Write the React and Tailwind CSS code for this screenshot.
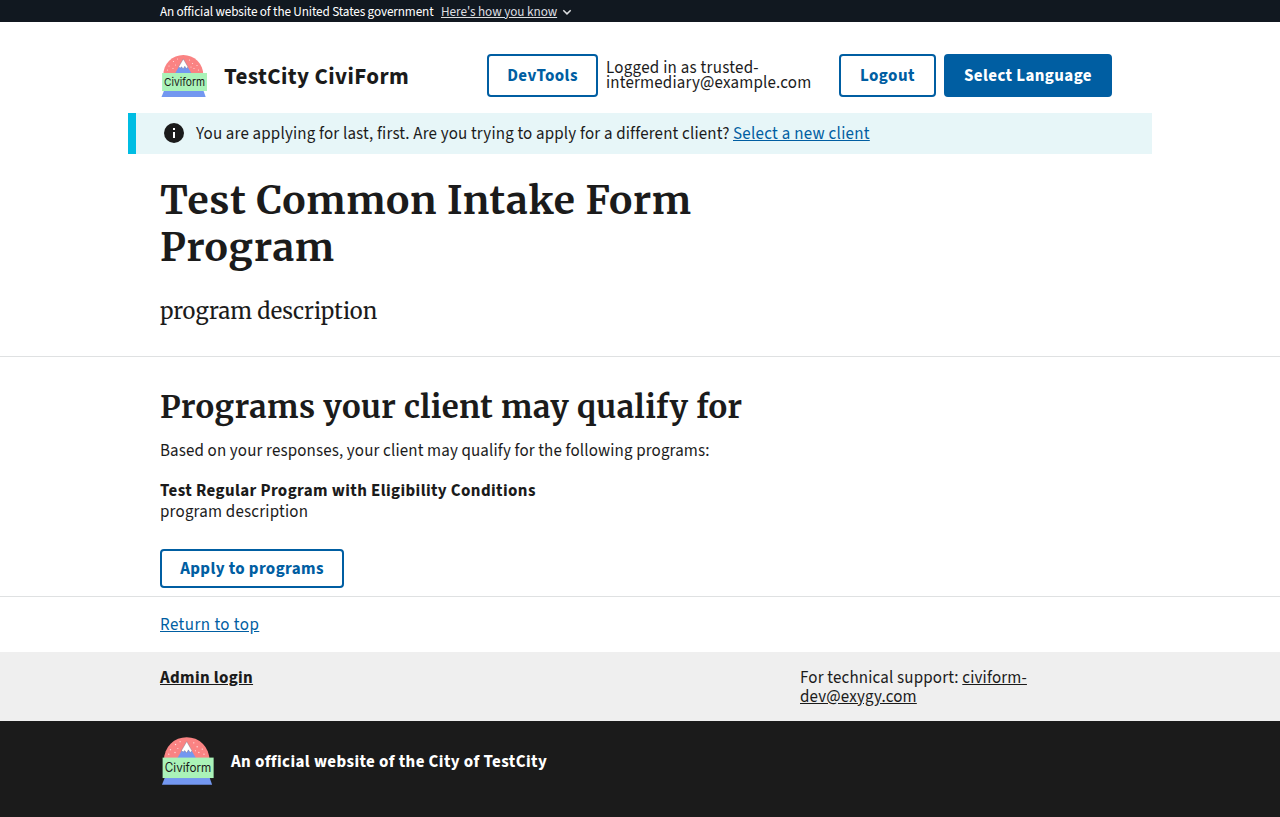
function Logo({ className }) {
  return (
    <svg viewBox="0 0 48 44" className={className} aria-label="Civiform logo">
      <path d="M3.3 21a20 20 0 0 1 40 0z" fill="#fa8383" />
      <g fill="#fde0e0">
        <circle cx="9" cy="12" r=".6" /><circle cx="13.5" cy="7.5" r=".6" />
        <circle cx="13" cy="14.5" r=".6" /><circle cx="17.5" cy="5" r=".5" />
        <circle cx="7.5" cy="16" r=".6" /><circle cx="15.5" cy="11" r=".5" />
        <circle cx="29.5" cy="6" r=".6" /><circle cx="32.5" cy="9.5" r=".6" />
        <circle cx="37" cy="11.5" r=".6" /><circle cx="34" cy="14.5" r=".6" />
        <circle cx="38.5" cy="16" r=".6" /><circle cx="31" cy="13" r=".5" />
      </g>
      <path d="M23.3 5.2L31.5 19.5H15z" fill="#7397f0" />
      <path d="M23.3 4.9L28 13l-1.7 1.5-1.5-2.3-1.6 2.8-1.6-2.2-1.5 1.3-1.4-1.3z" fill="#fff" stroke="#776b78" strokeWidth=".35" />
      <path d="M4 36.8h39.5l2.2 6.2H1.5z" fill="#7397f0" />
      <rect x="2.1" y="19" width="44.9" height="18" fill="#aaf3b8" />
      <text x="4" y="31.7" fontSize="11" textLength="41" lengthAdjust="spacingAndGlyphs" fill="#1b1b1b" className="font-['Inter','Roboto',sans-serif]">Civiform</text>
    </svg>
  )
}

const button = 'flex h-[43px] shrink-0 items-center justify-center whitespace-nowrap rounded-[4px] border-2 border-[#005ea2] pt-px font-bold'
const container = 'mx-auto w-[1024px] px-8'

export default function App() {
  return (
    <div className="h-[817px] overflow-hidden bg-white font-['Source_Sans_3','Noto_Sans_CJK_SC',sans-serif] text-[16.96px] leading-[21px] text-[#1b1b1b]">
      <div className="h-[22px] bg-[#111820] text-[13.2px] text-white">
        <div className={`${container} flex h-[22px] items-center whitespace-nowrap`}>
          <span className="w-[281px] pt-px tracking-[-0.13px]">An official website of the United States government</span>
          <button className="w-[116px] pt-px text-left leading-[22px] tracking-[-0.05px] text-[#dcdee0] underline">Here's how you know</button>
          <svg viewBox="0 0 10 10" className="ml-[5px] mt-px size-[10px]" fill="none" stroke="#dcdee0" strokeWidth="1.5">
            <path d="M1.3 3.2L5 6.9l3.7-3.7" />
          </svg>
        </div>
      </div>

      <header className={`${container} flex h-[91px] items-start pt-8`}>
        <Logo className="h-[44px] w-[48px]" />
        <div className="ml-4 mt-[8px] w-[263px] whitespace-nowrap text-[23px] font-bold leading-[30px] tracking-[0.42px]">TestCity CiviForm</div>
        <button className={`${button} w-[111px] tracking-[0.43px] text-[#005ea2]`}>DevTools</button>
        <p className="ml-2 mt-[7px] w-[233px] leading-[15px]">
          <span className="tracking-[0.27px]">Logged in as trusted-</span><br />
          <span className="tracking-[0.17px]">intermediary@example.com</span>
        </p>
        <button className={`${button} w-[97px] tracking-[0.5px] text-[#005ea2]`}>Logout</button>
        <button className={`${button} ml-2 w-[168px] bg-[#005ea2] tracking-[0.4px] text-white`}>Select Language</button>
      </header>

      <div className="mx-auto flex h-[41px] w-[1024px] items-center whitespace-nowrap border-l-8 border-[#00bde3] bg-[#e7f6f8] pl-[28px]">
        <svg viewBox="0 0 20 20" className="mb-px mr-[12px] size-[20px]">
          <circle cx="10" cy="10" r="10" fill="#1b1b1b" />
          <path d="M9 5h2v2H9zM9 9h2v6H9z" fill="#fff" />
        </svg>
        <span className="w-[537px] pt-px tracking-[0.17px]">You are applying for last, first. Are you trying to apply for a different client?</span>
        <a className="pt-px tracking-[0.27px] text-[#005ea2] underline">Select a new client</a>
      </div>

      <main>
        <section className="h-[203px] border-b border-[#dfe1e2]">
          <div className={`${container} pt-[23px] font-['Merriweather','Noto_Serif',serif]`}>
            <h1 className="w-[640px] text-[39.04px] font-bold leading-[47px] tracking-[0.68px]">Test Common Intake Form Program</h1>
            <p className="mt-[24px] text-[21.92px] leading-[33px]">program description</p>
          </div>
        </section>
        <section className="h-[240px] border-b border-[#dfe1e2]">
          <div className={`${container} pt-[30px]`}>
            <h2 className="whitespace-nowrap font-['Merriweather','Noto_Serif',serif] text-[31.2px] font-bold leading-[40px] tracking-[0.44px]">Programs your client may qualify for</h2>
            <p className="mt-[14px] tracking-[0.14px]">Based on your responses, your client may qualify for the following programs:</p>
            <p className="mt-[19px] font-bold tracking-[0.39px]">Test Regular Program with Eligibility Conditions</p>
            <p className="tracking-[0.2px]">program description</p>
            <button className="mt-[26px] flex h-[39px] w-[184px] items-center justify-center rounded-[4px] border-2 border-[#005ea2] font-bold tracking-[0.39px] text-[#005ea2]"><span className="mt-px">Apply to programs</span></button>
          </div>
        </section>
      </main>

      <footer>
        <div className={`${container} h-[55px] pt-[18px]`}>
          <a className="tracking-[0.46px] text-[#005ea2] underline">Return to top</a>
        </div>
        <div className="h-[69px] bg-[#efefef]">
          <div className={`${container} flex pt-[17px] leading-[19px]`}>
            <a className="w-[640px] font-bold tracking-[0.34px] underline">Admin login</a>
            <p className="whitespace-nowrap tracking-[0.17px]">
              For technical support: <a className="underline">civiform-<br />dev@exygy.com</a>
            </p>
          </div>
        </div>
        <div className="h-[96px] bg-[#1b1b1b] text-white">
          <div className={`${container} flex items-start pt-[15px]`}>
            <Logo className="h-[50px] w-[55px]" />
            <p className="ml-4 mt-[16px] font-bold tracking-[0.4px]">An official website of the City of TestCity</p>
          </div>
        </div>
      </footer>
    </div>
  )
}
